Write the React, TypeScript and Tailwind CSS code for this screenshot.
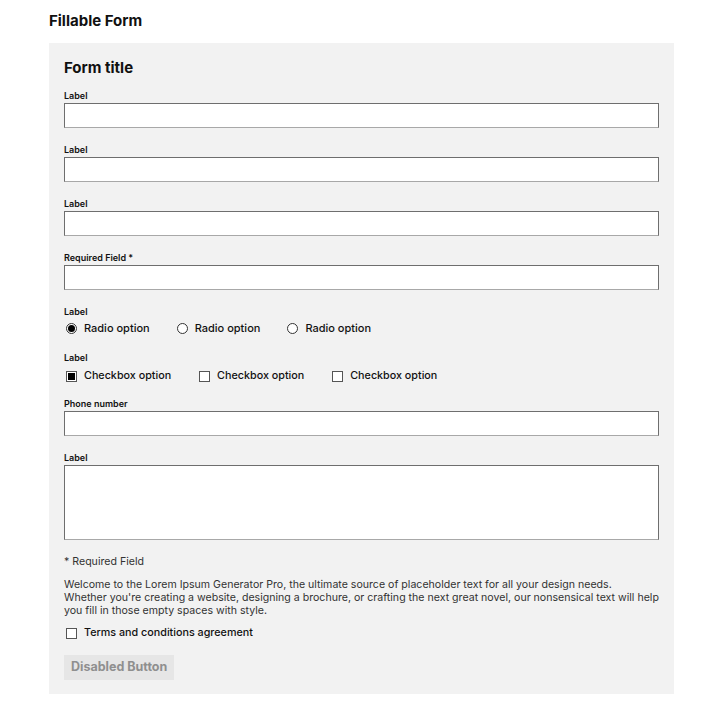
import React from "react";

const font = { fontFamily: "Inter, 'Noto Sans', sans-serif" };

function Label({ children }: { children: React.ReactNode }) {
  return (
    <div className="text-[9px] leading-[11px] font-semibold text-[#111]">
      {children}
    </div>
  );
}

function TextInput({ tall = false }: { tall?: boolean }) {
  return (
    <div
      className={`mt-[2px] w-full bg-white border border-[#6e6e6e] border-b-[#a8a8a8] ${
        tall ? "h-[75px]" : "h-[25px]"
      }`}
    />
  );
}

function Field({ label, tall = false, className = "" }: { label: string; tall?: boolean; className?: string }) {
  return (
    <div className={className}>
      <Label>{label}</Label>
      <TextInput tall={tall} />
    </div>
  );
}

function Radio({ checked, label }: { checked?: boolean; label: string }) {
  return (
    <div className="flex items-center gap-[7px]">
      <div className="w-[11px] h-[11px] rounded-full border border-[#333] bg-white flex items-center justify-center">
        {checked && <div className="w-[7px] h-[7px] rounded-full bg-black" />}
      </div>
      <span className="text-[11px] leading-[14px] font-medium text-[#111]">{label}</span>
    </div>
  );
}

function Check({ checked, label }: { checked?: boolean; label: string }) {
  return (
    <div className="flex items-center gap-[7px]">
      <div className="w-[11px] h-[11px] border border-[#555] bg-white flex items-center justify-center">
        {checked && <div className="w-[7px] h-[7px] bg-black" />}
      </div>
      <span className="text-[10.75px] leading-[14px] font-medium text-[#111]">{label}</span>
    </div>
  );
}

export default function App() {
  return (
    <div className="min-h-[723px] bg-white text-black" style={font}>
      <div className="pl-[49px] pt-[11px]">
        <h1 className="text-[15px] leading-[19px] font-bold text-[#111]">Fillable Form</h1>
        <div className="mt-[13px] w-[625px] bg-[#f2f2f2] px-[15px] pt-[15px] pb-[14px]">
          <h2 className="text-[15px] leading-[20px] font-bold text-[#111]">Form title</h2>
          <Field label="Label" className="mt-[12px]" />
          <Field label="Label" className="mt-[16px]" />
          <Field label="Label" className="mt-[16px]" />
          <Field label="Required Field *" className="mt-[16px]" />

          <div className="mt-[16px]">
            <Label>Label</Label>
            <div className="mt-[4px] ml-[2px] flex gap-[27px]">
              <Radio checked label="Radio option" />
              <Radio label="Radio option" />
              <Radio label="Radio option" />
            </div>
          </div>

          <div className="mt-[17px]">
            <Label>Label</Label>
            <div className="mt-[6px] ml-[2px] flex gap-[28px]">
              <Check checked label="Checkbox option" />
              <Check label="Checkbox option" />
              <Check label="Checkbox option" />
            </div>
          </div>

          <Field label="Phone number" className="mt-[15px]" />
          <Field label="Label" tall className="mt-[16px]" />

          <p className="mt-[15px] text-[10.6px] leading-[14px] text-[#333]">* Required Field</p>
          <p className="mt-[9px] text-[10.6px] leading-[13px] text-[#333]">
            Welcome to the Lorem Ipsum Generator Pro, the ultimate source of placeholder text for all your design needs.
            <br />
            Whether you're creating a website, designing a brochure, or crafting the next great novel, our nonsensical text will help
            <br />
            you fill in those empty spaces with style.
          </p>

          <div className="mt-[9px] ml-[2px]">
            <Check label="Terms and conditions agreement" />
          </div>

          <button
            disabled
            className="mt-[15px] h-[25px] px-[7px] bg-[#e6e6e6] text-[12.5px] font-bold text-[#8f8f8f]"
          >
            Disabled Button
          </button>
        </div>
      </div>
    </div>
  );
}
